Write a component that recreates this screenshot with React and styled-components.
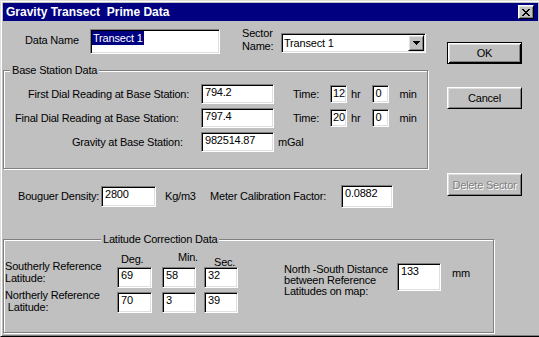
import React from 'react'
import styled, { createGlobalStyle } from 'styled-components'

const GlobalStyle = createGlobalStyle`
  html, body {
    margin: 0;
    padding: 0;
    background: #c0c0c0;
    overflow: hidden;
  }
  body {
    font-family: "Liberation Sans", Arial, sans-serif;
    font-size: 11px;
    color: #000;
  }
`

const Window = styled.div`
  box-sizing: border-box;
  width: 541px;
  height: 337px;
  overflow: hidden;
  background: #c0c0c0;
  border: 1px solid;
  border-color: #dfdfdf #000 #000 #dfdfdf;
  box-shadow: inset 1px 1px #fff, inset -1px -1px #808080;
  padding: 2px;
  display: flex;
  flex-direction: column;
  letter-spacing: -0.2px;
  & > * { flex: none; }
`

const TitleBar = styled.div`
  height: 18px;
  display: flex;
  align-items: center;
  justify-content: space-between;
  padding: 0 4px 0 3px;
  background: #000080;
  color: #fff;
`

const Title = styled.span`
  font-size: 12px;
  font-weight: bold;
  letter-spacing: 0;
  white-space: pre;
`

const bevel = `
  border: 1px solid;
  border-color: #fff #000 #000 #fff;
  box-shadow: inset 1px 1px #dfdfdf, inset -1px -1px #808080;
`

const CloseButton = styled.div`
  box-sizing: border-box;
  width: 16px;
  height: 14px;
  display: flex;
  align-items: center;
  justify-content: center;
  background: #c0c0c0;
  ${bevel}
  svg { margin-left: -1px; }
`

const TopArea = styled.div`
  display: flex;
  align-items: flex-start;
`

const MainCol = styled.div`
  width: 425px;
  flex: none;
  display: flex;
  flex-direction: column;
`

const ButtonCol = styled.div`
  width: 75px;
  margin-left: 19px;
  display: flex;
  flex-direction: column;
`

const Button = styled.div`
  box-sizing: border-box;
  height: ${p => p.$h || 22}px;
  margin-top: ${p => p.$mt || 0}px;
  display: flex;
  align-items: center;
  justify-content: center;
  background: #c0c0c0;
  ${bevel}
  ${p => p.$default && `
    border-color: #000;
    box-shadow: inset 1px 1px #fff, inset -1px -1px #000, inset 2px 2px #dfdfdf, inset -2px -2px #808080;
  `}
  ${p => p.$disabled && `
    color: #808080;
    text-shadow: 1px 1px #fff;
  `}
`

const HeaderRow = styled.div`
  display: flex;
  align-items: flex-start;
  margin-top: 8px;
  padding-left: 22px;
  height: 25px;
`

const Caption = styled.span`
  flex: none;
  display: block;
  width: ${p => (p.$w ? `${p.$w}px` : 'auto')};
  margin-left: ${p => p.$ml || 0}px;
  margin-top: ${p => p.$mt || 0}px;
  line-height: ${p => p.$lh || 13}px;
  white-space: nowrap;
`

const Field = styled.div`
  box-sizing: border-box;
  flex: none;
  width: ${p => p.$w}px;
  height: ${p => p.$h || 20}px;
  margin-left: ${p => p.$ml || 0}px;
  margin-top: ${p => p.$mt || 0}px;
  padding: 1px ${p => p.$pad ?? 3}px;
  background: #fff;
  border: 1px solid;
  border-color: #808080 #fff #fff #808080;
  box-shadow: inset 1px 1px #000, inset -1px -1px #dfdfdf;
  line-height: 13px;
  white-space: nowrap;
  overflow: hidden;
`

const Selected = styled.span`
  display: inline-block;
  padding: 0 1px;
  line-height: 14px;
  background: #000080;
  color: #fff;
`

const Combo = styled(Field)`
  display: flex;
  align-items: center;
  justify-content: space-between;
  padding: 1px;
  span { padding-left: 1px; }
`

const DropButton = styled.div`
  box-sizing: border-box;
  width: 16px;
  height: 16px;
  display: flex;
  align-items: center;
  justify-content: center;
  background: #c0c0c0;
  ${bevel}
`

const Group = styled.fieldset`
  box-sizing: border-box;
  width: ${p => p.$w}px;
  ${p => p.$h && `height: ${p.$h}px;`}
  min-width: 0;
  margin: ${p => p.$mt}px 0 0;
  padding: 0;
  border: 1px solid #808080;
  box-shadow: inset 1px 1px #fff, 1px 1px #fff;
`

const Legend = styled.legend`
  margin-left: ${p => p.$ml}px;
  padding: 0 2px;
  line-height: 13px;
  background: #c0c0c0;
`

const Rows = styled.div`
  display: flex;
  flex-direction: column;
  gap: 4px;
  padding: 7px 0 16px;
`

const BaseRow = styled.div`
  display: flex;
  align-items: center;
  height: 20px;
`

const RowLabel = styled.span`
  box-sizing: border-box;
  flex: none;
  width: 197px;
  padding-left: ${p => p.$indent}px;
  white-space: nowrap;
`

const FactorRow = styled.div`
  display: flex;
  align-items: center;
  height: 23px;
  margin-top: 16px;
  padding-left: 15px;
`

const LatBody = styled.div`
  display: flex;
  align-items: flex-start;
`

const LatGrid = styled.div`
  display: grid;
  grid-template-columns: 113px 45px 42px 34px;
  grid-template-rows: 14px 25px 21px;
  align-items: start;
  padding-top: 7px;
`

const ColHead = styled.span`
  margin-left: ${p => p.$ml}px;
  margin-top: ${p => p.$mt || 0}px;
  line-height: 13px;
  white-space: nowrap;
`

const RefLabel = styled.span`
  padding-left: 1px;
  margin-top: ${p => p.$mt}px;
  line-height: 12px;
  white-space: nowrap;
`

const CloseGlyph = () => (
  <svg width="8" height="7" viewBox="0 0 8 7" shapeRendering="crispEdges">
    <path
      fill="#000"
      d="M0 0h2v1h-2z M6 0h2v1h-2z M1 1h2v1h-2z M5 1h2v1h-2z M2 2h4v1h-4z M3 3h2v1h-2z M2 4h4v1h-4z M1 5h2v1h-2z M5 5h2v1h-2z M0 6h2v1h-2z M6 6h2v1h-2z"
    />
  </svg>
)

const ArrowGlyph = () => (
  <svg width="7" height="4" viewBox="0 0 7 4" shapeRendering="crispEdges">
    <path fill="#000" d="M0 0h7v1h-1v1h-1v1h-1v1h-1v-1h-1v-1h-1v-1h-1z" />
  </svg>
)

function TimeEntry({ hours, minutes }) {
  return (
    <>
      <Caption $ml={19}>Time:</Caption>
      <Field $w={17} $h={18} $ml={11} $pad={2}>{hours}</Field>
      <Caption $ml={4}>hr</Caption>
      <Field $w={17} $h={18} $ml={12} $pad={2}>{minutes}</Field>
      <Caption $ml={10}>min</Caption>
    </>
  )
}

export default function App() {
  return (
    <>
      <GlobalStyle />
      <Window>
        <TitleBar>
          <Title>Gravity Transect  Prime Data</Title>
          <CloseButton><CloseGlyph /></CloseButton>
        </TitleBar>

        <TopArea>
          <MainCol>
            <HeaderRow>
              <Caption $w={65} $mt={5}>Data Name</Caption>
              <Field $w={130} $h={25} $pad={1}><Selected>Transect 1</Selected></Field>
              <Caption $w={39} $ml={22} $mt={-2}>Sector<br />Name:</Caption>
              <Combo $w={145} $h={20} $mt={4}>
                <span>Transect 1</span>
                <DropButton><ArrowGlyph /></DropButton>
              </Combo>
            </HeaderRow>

            <Group $w={425} $mt={10}>
              <Legend $ml={6}>Base Station Data</Legend>
              <Rows>
                <BaseRow>
                  <RowLabel $indent={24}>First Dial Reading at Base Station:</RowLabel>
                  <Field $w={73}>794.2</Field>
                  <TimeEntry hours="12" minutes="0" />
                </BaseRow>
                <BaseRow>
                  <RowLabel $indent={11}>Final Dial Reading at Base Station:</RowLabel>
                  <Field $w={73}>797.4</Field>
                  <TimeEntry hours="20" minutes="0" />
                </BaseRow>
                <BaseRow>
                  <RowLabel $indent={68}>Gravity at Base Station:</RowLabel>
                  <Field $w={73}>982514.87</Field>
                  <Caption $ml={4}>mGal</Caption>
                </BaseRow>
              </Rows>
            </Group>

            <FactorRow>
              <Caption $w={83}>Bouguer Density:</Caption>
              <Field $w={55} $h={21}>2800</Field>
              <Caption $w={45} $ml={9}>Kg/m3</Caption>
              <Caption $w={131}>Meter Calibration Factor:</Caption>
              <Field $w={52} $h={23}>0.0882</Field>
            </FactorRow>
          </MainCol>

          <ButtonCol>
            <Button $default $mt={21}>OK</Button>
            <Button $mt={23}>Cancel</Button>
            <Button $disabled $mt={64} $h={23}>Delete Sector</Button>
          </ButtonCol>
        </TopArea>

        <Group $w={491} $h={100} $mt={25}>
          <Legend $ml={97}>Latitude Correction Data</Legend>
          <LatBody>
            <LatGrid>
              <span />
              <ColHead $ml={4} $mt={0}>Deg.</ColHead>
              <ColHead $ml={16} $mt={-2}>Min.</ColHead>
              <ColHead $ml={10} $mt={3}>Sec.</ColHead>

              <RefLabel $mt={-7}>Southerly Reference<br />Latitude:</RefLabel>
              <Field $w={35} $h={21}>69</Field>
              <Field $w={34} $h={21}>58</Field>
              <Field $w={34} $h={21}>32</Field>

              <RefLabel $mt={-3}>Northerly Reference<br />{'\u00a0'}Latitude:</RefLabel>
              <Field $w={35} $h={21}>70</Field>
              <Field $w={34} $h={21}>3</Field>
              <Field $w={34} $h={21}>39</Field>
            </LatGrid>

            <Caption $w={113} $ml={46} $mt={18} $lh={11}>
              North -South Distance<br />between Reference<br />Latitudes on map:
            </Caption>
            <Field $w={44} $h={28} $mt={17}>133</Field>
            <Caption $ml={11} $mt={21}>mm</Caption>
          </LatBody>
        </Group>
      </Window>
    </>
  )
}
